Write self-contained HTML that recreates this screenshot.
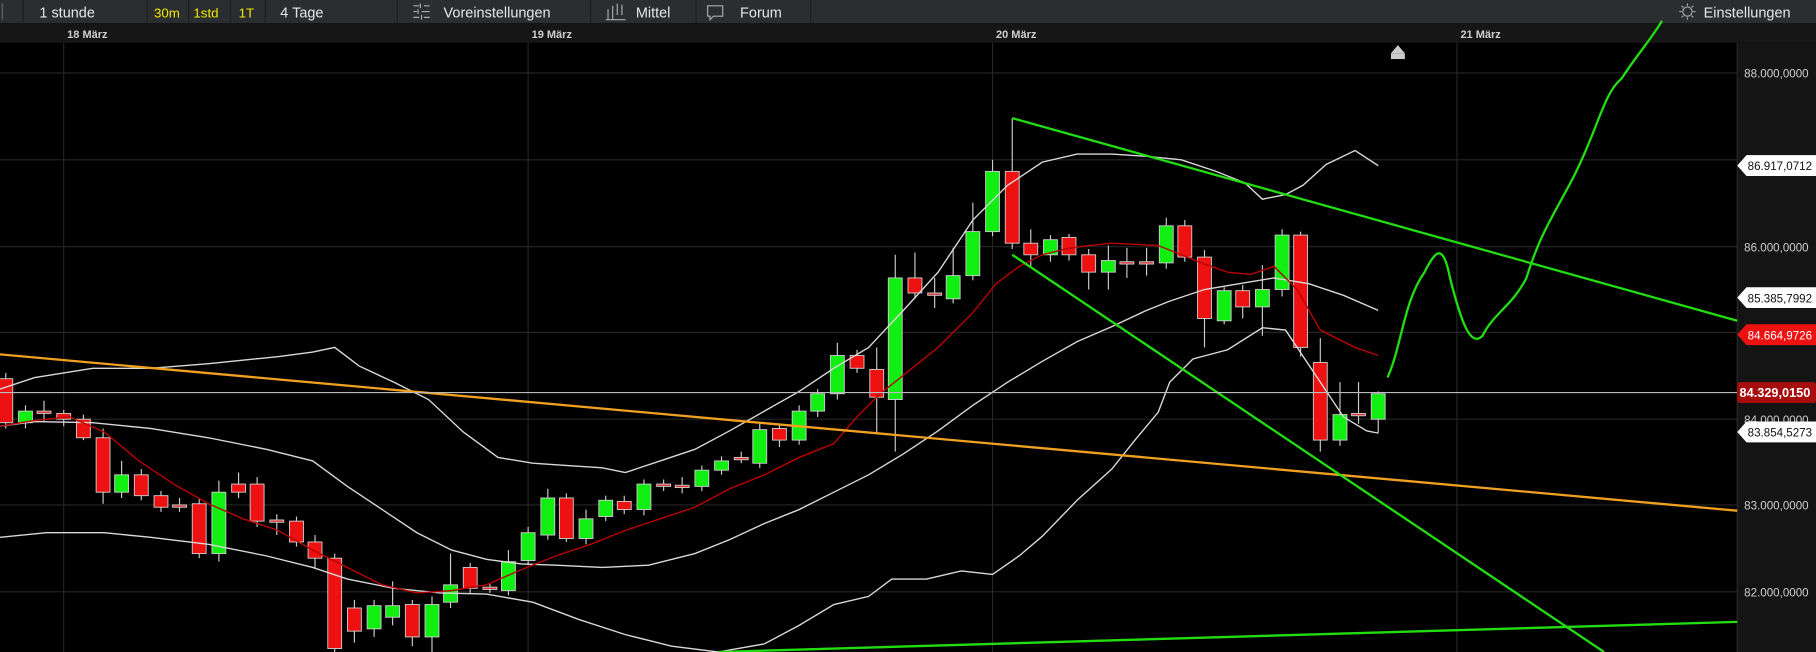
<!DOCTYPE html>
<html><head><meta charset="utf-8"><style>
html,body{margin:0;padding:0;background:#000;width:1816px;height:652px;overflow:hidden}
svg{display:block}
text{font-family:"Liberation Sans",Arial,sans-serif}
</style></head><body>
<svg id="s" width="1816" height="652" viewBox="0 0 1568 563" preserveAspectRatio="none">
<rect width="1568" height="563" fill="#000"/>
<!-- toolbar -->
<rect width="1568" height="20" fill="#2b2e31"/>
<g stroke="#1c1e20" stroke-width="1">
<line x1="20" y1="0" x2="20" y2="20"/><line x1="127" y1="0" x2="127" y2="20"/><line x1="163" y1="0" x2="163" y2="20"/><line x1="199" y1="0" x2="199" y2="20"/><line x1="229" y1="0" x2="229" y2="20"/><line x1="343" y1="0" x2="343" y2="20"/><line x1="510" y1="0" x2="510" y2="20"/><line x1="601" y1="0" x2="601" y2="20"/><line x1="700" y1="0" x2="700" y2="20"/>
</g>
<g font-size="12.5" fill="#e6e6e6">
<text x="34" y="15">1 stunde</text>
<text x="133" y="15" fill="#f2e600" font-size="11.5">30m</text>
<text x="167" y="15" fill="#f2e600" font-size="11.5">1std</text>
<text x="206" y="15" fill="#f2e600" font-size="11.5">1T</text>
<text x="242" y="15">4 Tage</text>
<text x="383" y="15">Voreinstellungen</text>
<text x="549" y="15">Mittel</text>
<text x="639" y="15">Forum</text>
<text x="1471" y="15">Einstellungen</text>
</g>
<g stroke="#aaa" fill="none" stroke-width="1">
<path d="M357 5h5M366 5h5M357 10h3M364 10h7M357 15h5M366 15h5M363 3v4M361 8v4M364 13v4"/>
<path d="M525 8v9M529 5v12M533 3v10M537 4v9M523 17h17"/>
<path d="M611 5h13v9h-8l-3 3v-3h-2z"/>
<circle cx="1457" cy="10" r="4"/>
<path d="M1457 3v2M1457 15v2M1450 10h2M1462 10h2M1452 5l1.5 1.5M1462 5l-1.5 1.5M1452 15l1.5-1.5M1462 15l-1.5-1.5"/>
<path d="M2 3v14" stroke="#666"/>
</g>
<!-- date row -->
<rect y="20" width="1568" height="17" fill="#161616"/>
<g font-size="9.5" fill="#cfcfcf" font-weight="bold">
<text x="58" y="33">18 März</text><text x="459" y="33">19 März</text><text x="860" y="33">20 März</text><text x="1261" y="33">21 März</text>
</g>
<path d="M1201 46l6-7 6 7z" fill="#ccc"/><rect x="1201" y="46" width="12" height="5" fill="#ccc"/>
<!-- grid -->
<g stroke="#262626" stroke-width="1">
<line x1="55" y1="37" x2="55" y2="563"/><line x1="456" y1="37" x2="456" y2="563"/><line x1="857" y1="37" x2="857" y2="563"/><line x1="1258" y1="37" x2="1258" y2="563"/>
<line x1="0" y1="63" x2="1500" y2="63"/><line x1="0" y1="138" x2="1500" y2="138"/><line x1="0" y1="213" x2="1500" y2="213"/><line x1="0" y1="287" x2="1500" y2="287"/><line x1="0" y1="362" x2="1500" y2="362"/><line x1="0" y1="436" x2="1500" y2="436"/><line x1="0" y1="511" x2="1500" y2="511"/>
</g>
<!-- right axis -->
<rect x="1500" y="37" width="68" height="526" fill="#141414"/>
<line x1="1500" y1="37" x2="1500" y2="563" stroke="#2a2a2a"/>
<g font-size="10" fill="#cfcfcf">
<text x="1506" y="67">88.000,0000</text><text x="1506" y="217">86.000,0000</text><text x="1506" y="291">85.000,0000</text><text x="1506" y="366">84.000,0000</text><text x="1506" y="440">83.000,0000</text><text x="1506" y="515">82.000,0000</text>
</g>
<!-- moving lines -->
<g id="c"></g>
<polyline fill="none" stroke="#d8d8d8" stroke-width="1.2" points="0,336 30,326 80,318 130,318 180,314 240,308 270,304 289,300 310,316 340,330 370,345 400,373 430,395 460,400 490,402 520,404 540,408 570,398 600,388 630,372 660,355 690,338 720,318 750,300 780,268 810,235 840,190 870,160 900,140 930,133 960,133 990,135 1020,138 1050,148 1075,158 1090,172 1110,168 1125,160 1145,142 1170,130 1190,143"/>
<polyline fill="none" stroke="#d8d8d8" stroke-width="1.2" points="0,368 30,364 80,365 130,370 180,378 230,388 270,398 300,420 330,440 360,460 390,475 420,483 450,487 480,488 520,490 560,488 600,478 630,466 660,452 690,440 720,425 750,410 780,392 810,372 840,350 870,330 900,312 930,295 960,282 990,268 1010,260 1040,250 1070,245 1100,240 1130,245 1160,255 1190,268"/>
<polyline fill="none" stroke="#d8d8d8" stroke-width="1.2" points="0,464 40,460 90,460 130,464 180,470 230,480 270,490 300,500 340,508 380,512 420,513 460,520 500,535 540,548 580,558 620,563 660,556 690,540 720,522 750,515 770,500 800,500 830,493 857,496 880,480 900,463 930,432 960,405 980,380 1000,356 1010,330 1030,310 1060,302 1090,283 1110,285 1140,330 1160,360 1180,372 1190,374"/>
<polyline fill="none" stroke="#b00" stroke-width="1.2" points="0,368 30,363 60,360 90,373 120,398 150,418 180,435 210,448 240,458 270,475 300,490 330,505 360,512 390,510 420,505 450,492 480,480 510,470 540,458 570,448 600,438 630,422 660,410 690,395 720,383 740,360 760,340 790,316 810,300 840,270 860,245 880,230 900,220 920,215 940,212 960,210 1000,212 1020,220 1040,228 1060,235 1080,237 1100,230 1120,250 1140,285 1170,300 1190,307"/>
<!-- drawn lines -->
<line x1="0" y1="306" x2="1500" y2="441" stroke="#f0a020" stroke-width="2"/>
<line x1="874" y1="102" x2="1500" y2="277" stroke="#22dd11" stroke-width="2"/>
<line x1="874" y1="220" x2="1385" y2="563" stroke="#22dd11" stroke-width="2"/>
<line x1="620" y1="563" x2="1500" y2="537" stroke="#22dd11" stroke-width="2"/>
<path d="M1198 326 C1210 300,1212 260,1230 235 C1240 215,1246 210,1252 240 C1262 280,1270 300,1280 290 C1290 270,1305 265,1318 240 C1330 200,1345 180,1360 150 C1380 110,1385 80,1400 68 C1415 45,1425 35,1435 18" fill="none" stroke="#22dd11" stroke-width="2"/>
<!-- current price -->
<line x1="0" y1="339" x2="1500" y2="339" stroke="#bbb" stroke-width="1"/>
<!-- tags -->
<g font-size="10">
<path d="M1500 143l8-9h60v18h-60z" fill="#fff"/><text x="1509" y="147" fill="#111">86.917,0712</text>
<path d="M1500 257l8-9h60v18h-60z" fill="#fff"/><text x="1509" y="261" fill="#111">85.385,7992</text>
<path d="M1500 289l8-9h60v18h-60z" fill="#ee1111"/><text x="1509" y="293" fill="#fff">84.664,9726</text>
<rect x="1500" y="330" width="68" height="18" rx="2" fill="#a80d0d"/><text x="1502" y="343" fill="#fff" font-weight="bold" font-size="11">84.329,0150</text>
<path d="M1500 373l8-9h60v18h-60z" fill="#fff"/><text x="1509" y="377" fill="#111">83.854,5273</text>
</g>
</svg>
<script>
var d=[[5,'r',327,365,322,370],[22,'g',355,365,350,370],[38,'d',356,356,346,364],[55,'r',357,362,354,368],[72,'r',362,378,358,380],[89,'r',378,425,370,435],[105,'g',410,425,398,430],[122,'r',410,428,405,432],[139,'r',428,438,424,442],[155,'d',437,437,430,442],[172,'r',435,478,430,482],[189,'g',425,478,415,485],[206,'r',418,425,408,430],[222,'r',418,450,412,455],[239,'d',450,450,444,462],[256,'r',450,468,446,472],[272,'r',468,482,462,490],[289,'r',482,560,478,563],[306,'r',525,545,518,555],[323,'g',523,543,518,550],[339,'g',523,533,502,540],[356,'r',522,550,518,558],[373,'g',522,550,515,563],[389,'g',505,520,478,525],[406,'r',490,508,486,512],[423,'d',508,508,504,512],[439,'g',485,510,475,514],[456,'g',460,484,455,488],[473,'g',430,462,422,466],[489,'r',430,465,426,468],[506,'g',448,465,440,470],[523,'g',432,446,428,450],[539,'r',433,440,428,444],[556,'g',418,440,414,445],[573,'d',419,419,414,424],[589,'d',420,420,412,426],[606,'g',406,420,402,424],[623,'g',398,406,394,410],[640,'d',396,396,390,400],[656,'g',371,400,366,404],[673,'r',370,380,366,386],[690,'g',355,380,350,384],[706,'g',340,355,336,360],[723,'g',307,340,296,345],[740,'r',307,318,302,322],[757,'r',319,343,300,375],[773,'g',240,345,220,390],[790,'r',240,253,218,258],[807,'d',254,254,240,266],[823,'g',238,258,214,262],[840,'g',200,238,175,242],[857,'g',148,200,138,204],[874,'r',148,210,102,215],[890,'r',210,220,198,230],[907,'g',207,220,203,226],[923,'r',205,220,202,225],[940,'r',220,235,215,250],[957,'g',225,235,212,250],[973,'d',227,227,214,240],[990,'d',227,227,214,238],[1007,'g',195,227,188,232],[1023,'r',195,222,190,226],[1040,'r',222,275,216,300],[1057,'g',251,277,248,280],[1073,'r',251,265,246,275],[1090,'g',250,265,229,290],[1107,'g',203,250,198,256],[1123,'r',203,300,200,308],[1140,'r',313,380,292,390],[1157,'g',358,380,330,385],[1173,'d',358,358,330,366],[1190,'g',340,362,338,374]];
var g=document.getElementById('c'),n='http://www.w3.org/2000/svg',h='';
d.forEach(function(c){var x=c[0],f=c[1]=='g'?'#11ee11':c[1]=='r'?'#ee1111':'#dd3333',t=c[2],b=c[3];
h+='<line x1="'+x+'" y1="'+c[4]+'" x2="'+x+'" y2="'+c[5]+'" stroke="#ccc" stroke-width="1"/>';
var hh=Math.max(b-t,2);h+='<rect x="'+(x-6)+'" y="'+(c[1]=='d'?t-1:t)+'" width="12" height="'+hh+'" fill="'+f+'" stroke="#ccc" stroke-width="0.8"/>';});
g.innerHTML=h;
</script>
</body></html>
